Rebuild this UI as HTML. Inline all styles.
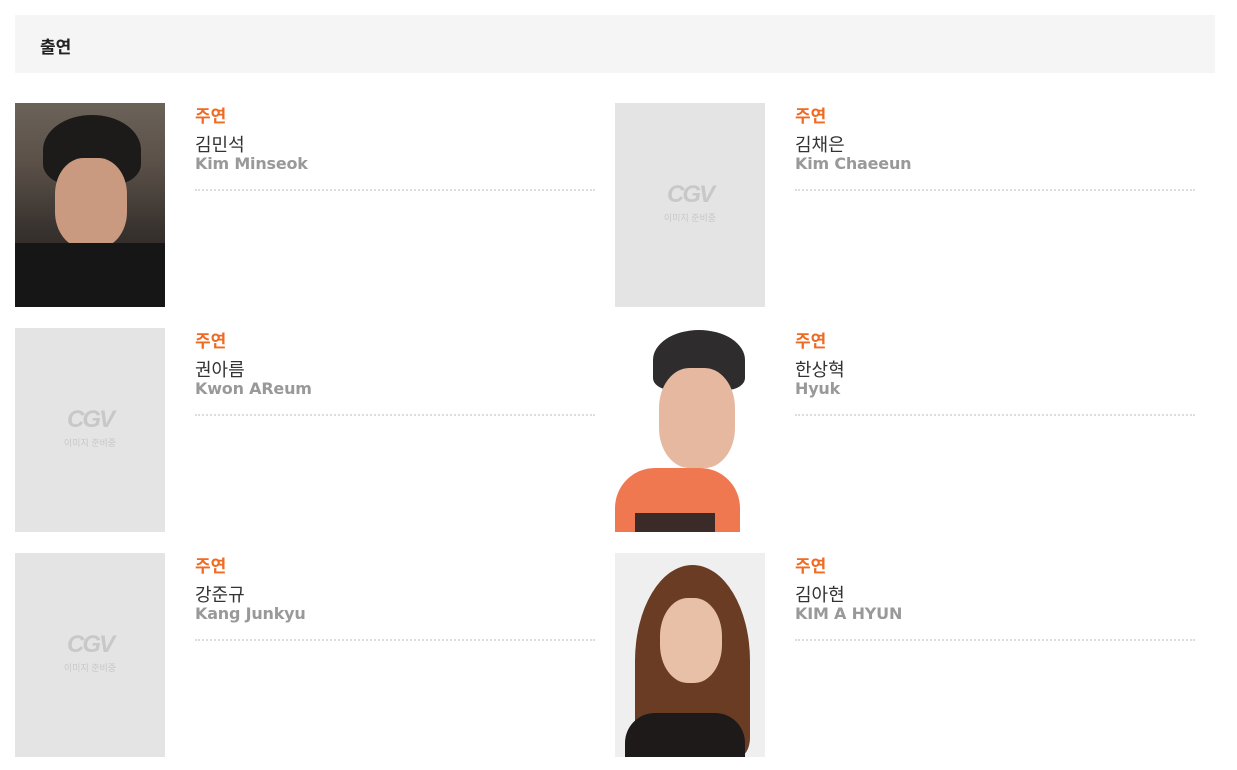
<!DOCTYPE html>
<html><head><meta charset="utf-8"><style>
body{margin:0;background:#fff;width:1237px;height:770px;overflow:hidden;font-family:"Liberation Sans","Noto Sans CJK KR",sans-serif}
.hd{position:absolute;left:15px;top:15px;width:1200px;height:58px;background:#f5f5f5}
.hd span{position:absolute;left:25px;top:18px;font-size:17px;font-weight:bold;color:#222}
.it{position:absolute;width:600px;height:204px}
.ph{position:absolute;left:0;top:0;width:150px;height:204px;background:#e4e4e4;overflow:hidden}
.logo{position:absolute;left:0;width:150px;top:78px;text-align:center;color:#c8c8c8}
.logo b{font:italic 900 24px "Liberation Sans",sans-serif;letter-spacing:-2px}
.logo div{font-size:9px;margin-top:2px}
.tx{position:absolute;left:180px;top:0;width:400px}
.r{position:absolute;top:-1px;font-size:17px;font-weight:bold;color:#f06a22}
.k{position:absolute;top:28px;font-size:18px;color:#333}
.e{position:absolute;top:51px;font:bold 16px "DejaVu Sans",sans-serif;color:#999;letter-spacing:-0.2px}
.l{position:absolute;top:86px;left:0;width:400px;border-top:2px dotted #ddd}
</style></head><body>
<div class="hd"><span>출연</span></div>

<div class="it" style="left:15px;top:103px">
<div class="ph" style="background:linear-gradient(180deg,#6b6258 0%,#5a5048 30%,#3a3430 60%,#1c1a1a 100%)">
<div style="position:absolute;left:28px;top:12px;width:98px;height:70px;border-radius:50% 50% 30% 30%;background:#1d1a1a"></div>
<div style="position:absolute;left:40px;top:55px;width:72px;height:90px;border-radius:40%;background:#c99a80"></div>
<div style="position:absolute;left:0;top:140px;width:150px;height:64px;background:#161616"></div>
</div>
<div class="tx"><div class="r">주연</div><div class="k">김민석</div><div class="e">Kim Minseok</div><div class="l"></div></div></div>

<div class="it" style="left:615px;top:103px">
<div class="ph"><div class="logo"><b>CGV</b><div>이미지 준비중</div></div></div>
<div class="tx"><div class="r">주연</div><div class="k">김채은</div><div class="e">Kim Chaeeun</div><div class="l"></div></div></div>

<div class="it" style="left:15px;top:328px">
<div class="ph"><div class="logo"><b>CGV</b><div>이미지 준비중</div></div></div>
<div class="tx"><div class="r">주연</div><div class="k">권아름</div><div class="e">Kwon AReum</div><div class="l"></div></div></div>

<div class="it" style="left:615px;top:328px">
<div class="ph" style="background:#fff">
<div style="position:absolute;left:38px;top:2px;width:92px;height:60px;border-radius:50% 50% 20% 20%;background:#2e2c2c"></div>
<div style="position:absolute;left:44px;top:40px;width:76px;height:100px;border-radius:40%;background:#e6b8a0"></div>
<div style="position:absolute;left:0;top:140px;width:125px;height:64px;border-radius:40px 40px 0 0;background:#f07850"></div>
<div style="position:absolute;left:20px;top:185px;width:80px;height:19px;background:#3a2a28"></div>
</div>
<div class="tx"><div class="r">주연</div><div class="k">한상혁</div><div class="e">Hyuk</div><div class="l"></div></div></div>

<div class="it" style="left:15px;top:553px">
<div class="ph"><div class="logo"><b>CGV</b><div>이미지 준비중</div></div></div>
<div class="tx"><div class="r">주연</div><div class="k">강준규</div><div class="e">Kang Junkyu</div><div class="l"></div></div></div>

<div class="it" style="left:615px;top:553px">
<div class="ph" style="background:#efefef">
<div style="position:absolute;left:20px;top:12px;width:115px;height:192px;border-radius:50% 50% 10% 10%;background:#6a3c24"></div>
<div style="position:absolute;left:45px;top:45px;width:62px;height:85px;border-radius:45%;background:#e8c0a8"></div>
<div style="position:absolute;left:10px;top:160px;width:120px;height:44px;background:#1e1a1a;border-radius:30px 30px 0 0"></div>
</div>
<div class="tx"><div class="r">주연</div><div class="k">김아현</div><div class="e">KIM A HYUN</div><div class="l"></div></div></div>
</body></html>
